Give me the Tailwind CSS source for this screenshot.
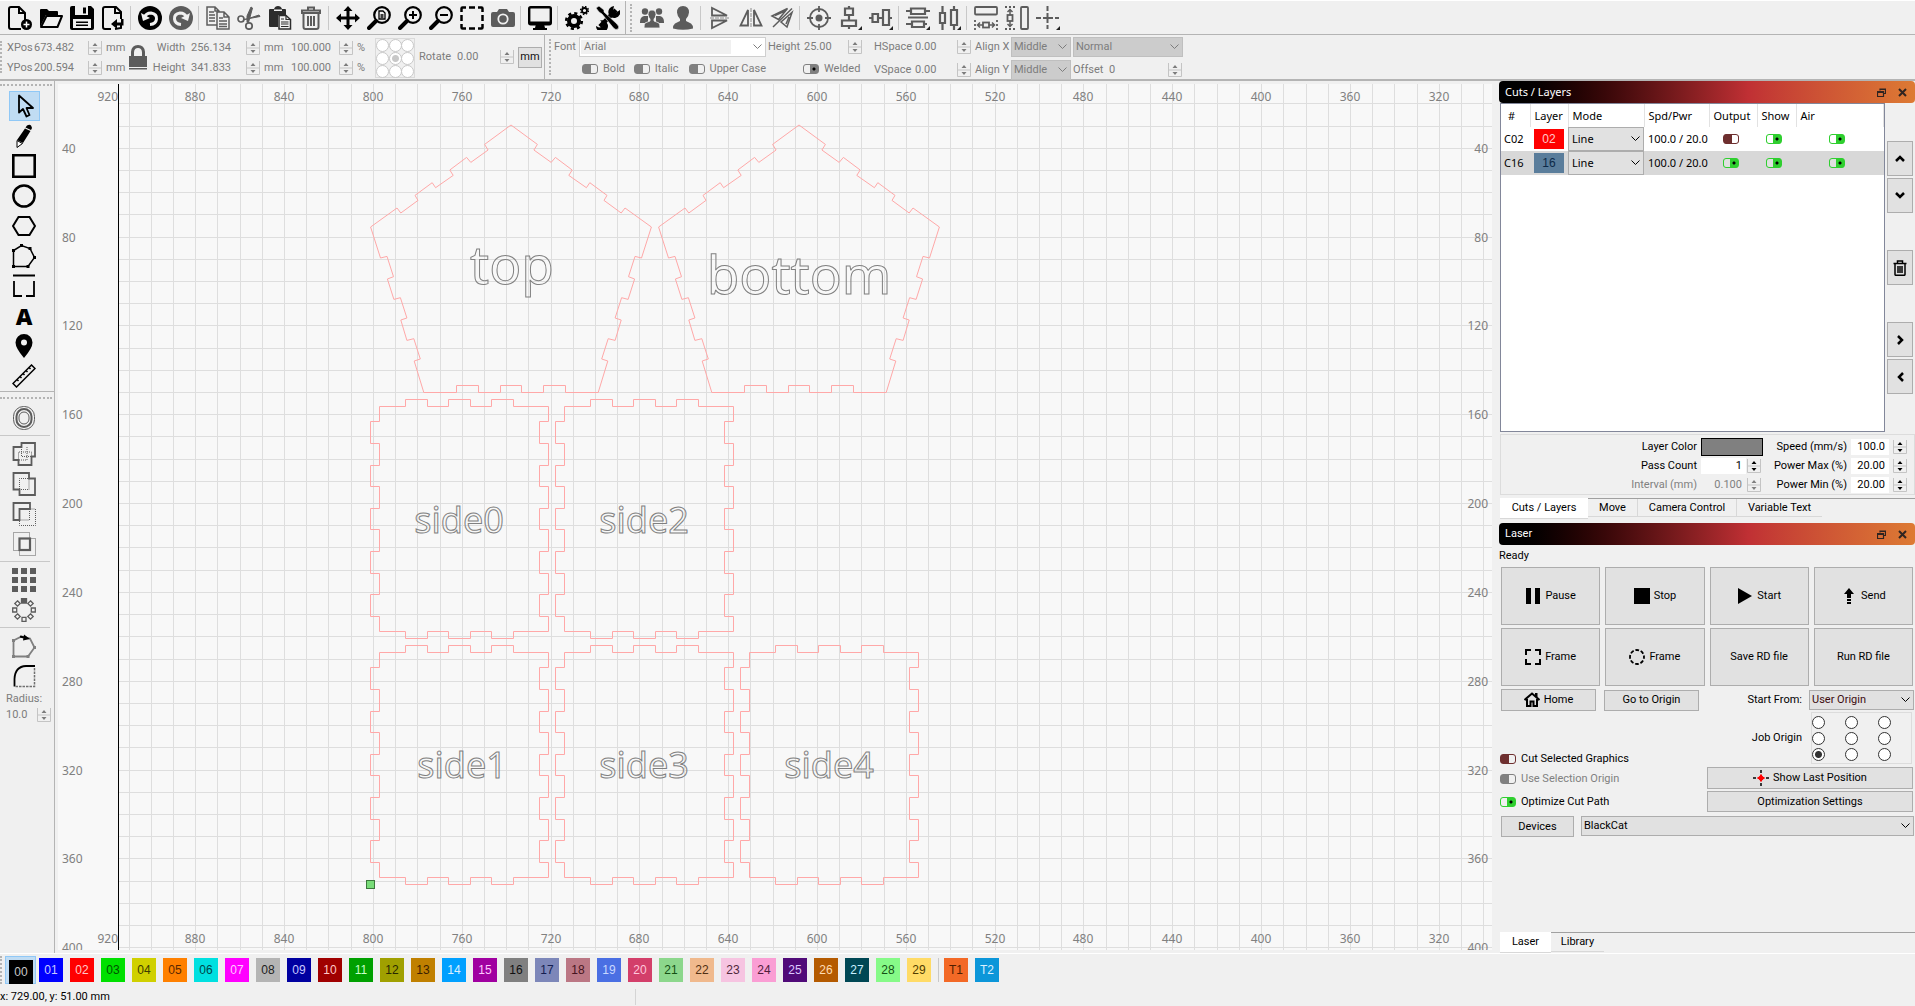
<!DOCTYPE html>
<html lang="en">
<head>
  <meta charset="UTF-8">
  <meta name="viewport" content="width=device-width, initial-scale=1.0">
  <script src="https://cdn.jsdelivr.net/npm/@tailwindcss/browser@4"></script>
  <title>Laser Layout</title>
</head>
<body class="h-screen flex flex-col overflow-hidden bg-[#f0f0f0] font-[Roboto,sans-serif] text-[11px] leading-4 text-black whitespace-nowrap">

  <!-- shared symbols -->
  <svg class="hidden">
    <symbol id="spin" viewBox="0 0 14 14">
      <path d="M.5 0V13.5H13.5V0M.5 7H13.5" fill="none" stroke="#c4c4c4"/>
      <path d="M4.500 5L7 2L9.500 5ZM4.500 9L7 12L9.500 9Z" fill="currentColor"/>
    </symbol>
    <symbol id="restore" viewBox="0 0 9 9">
      <path d="M3 2.500V1H8.500V5.500H6.500M.5 3.500H6.500V8.500H.5ZM.5 4.500H6.500M3 1.500H8.500" fill="none" stroke="#302420" stroke-width="1.200"/>
    </symbol>
    <symbol id="close" viewBox="0 0 9 9">
      <path d="M1 1L8 8M8 1L1 8" stroke="#302420" stroke-width="2"/>
    </symbol>
    <symbol id="chev" viewBox="0 0 9 6">
      <path d="M.5 .5L4.500 4.500L8.500 .5" fill="none" stroke="currentColor"/>
    </symbol>
    <symbol id="side-panel" viewBox="0 0 180 241" overflow="visible">
      <path d="M9 7H35V0H57V7H78V0H100V7H121V0H143V7H178V22H169V44H178V66H169V87H178V109H169V130H178V152H169V174H178V195H169V217H178V232H143V239H121V232H100V239H78V232H57V239H35V232H9V217H0V195H9V174H0V152H9V130H0V109H9V87H0V66H9V44H0V22H9Z"/>
    </symbol>
  </svg>

  <!-- main toolbar -->
  <header class="flex h-[35px] shrink-0 items-center border-t border-b border-t-white border-b-[#b4b4b4] pt-px pl-1">
    <button aria-label="New" class="w-[31px] pl-1"><svg class="size-6" viewBox="0 0 24 24" fill="none" stroke="#000" stroke-width="2"><path d="M13 23H3Q1 23 1 21V3Q1 1 3 1H11L17 7V14M11 1V7H17"/><circle cx="18.500" cy="18.500" r="5.500" fill="#000" stroke="none"/><path d="M18.500 15.500V21.500M15.500 18.500H21.500" stroke="#fff" stroke-width="1.500"/></svg></button>
    <button aria-label="Open" class="w-[31px] pl-1"><svg class="size-6" viewBox="0 0 24 24"><path d="M1 21V4Q1 3 2 3H8L10 5H18Q19 5 19 6V9H7Z" fill="#000"/><path d="M7.500 10H23L18.500 21H2Z" fill="#f0f0f0" stroke="#000" stroke-width="2" stroke-linejoin="round"/></svg></button>
    <button aria-label="Save" class="w-[31px] pl-1"><svg class="size-6" viewBox="0 0 24 24"><path d="M0 2Q0 0 2 0H21L24 3V22Q24 24 22 24H2Q0 24 0 22Z"/><path d="M5 0H18V9H5ZM3 13H21V22H3Z" fill="#f0f0f0"/><path d="M13 1.500H16V7.500H13ZM6 15.500H18V17H6ZM6 18.500H18V20H6Z"/></svg></button>
    <button aria-label="Import" class="w-[31px] pl-1"><svg class="size-6" viewBox="0 0 24 24" fill="none" stroke="#000" stroke-width="2"><path d="M10 23H4Q2 23 2 21V3Q2 1 4 1H15L20 6V13M20 17V22L14 23M14 1V7H20"/><path d="M10 18L16 13V16.500H20V13H22.500V19.500H16V23Z" fill="#000" stroke="none"/></svg></button>
    <span class="mx-[2px] h-6 w-[2px] border-l border-[#c8c8c8]"></span>
    <button aria-label="Undo" class="w-[31px] pl-1"><svg class="size-6" viewBox="0 0 24 24"><circle cx="12" cy="12" r="12"/><path d="M6 12Q8 7 13 7Q19 8 18.500 13Q18 18 12 18.500" fill="none" stroke="#f0f0f0" stroke-width="3"/><path d="M3 7L5 15L12 12Z" fill="#f0f0f0"/></svg></button>
    <button aria-label="Redo" class="w-[31px] pl-1"><svg class="size-6" viewBox="0 0 24 24"><circle cx="12" cy="12" r="12" fill="#5c5c5c"/><path d="M18 12Q16 7 11 7Q5 8 5.500 13Q6 18 12 18.500" fill="none" stroke="#f0f0f0" stroke-width="3"/><path d="M21 7L19 15L12 12Z" fill="#f0f0f0"/></svg></button>
    <span class="mx-[2px] h-6 w-[2px] border-l border-[#c8c8c8]"></span>
    <button aria-label="Copy" class="w-[31px] pl-1"><svg class="size-6" viewBox="0 0 24 24" fill="#f0f0f0" stroke="#5c5c5c" stroke-width="1.500"><path d="M1 1H9L13 5V19H1ZM9 1V5H13M3 6H8M3 9H9M3 12H9M3 15H9"/><path d="M11 6H18L23 11V23H11ZM18 6V11H23M13 12H17M13 15H21M13 18H21M13 20.500H21"/></svg></button>
    <button aria-label="Cut" class="w-[31px] pl-1"><svg class="size-6" viewBox="0 0 24 24" fill="none" stroke="#5c5c5c" stroke-width="1.700"><circle cx="4" cy="13" r="3"/><circle cx="12" cy="20" r="3.200"/><path d="M7 13.500L23 10.500L22 9L10 13Z" fill="#5c5c5c" stroke-width="1"/><path d="M11.500 16.500L15.500 2L14 1L10 10V16Z" fill="#5c5c5c" stroke-width="1"/></svg></button>
    <button aria-label="Paste" class="w-[31px] pl-1"><svg class="size-6" viewBox="0 0 24 24"><path d="M1 4Q1 3 2 3H6Q7 0 10 0Q13 0 14 3H17Q18 3 18 4V9H10V21H2Q1 21 1 20Z" fill="#2c2c2c"/><path d="M6 3.500H14V5H6Z" fill="#f0f0f0"/><path d="M11 9.500H18L22.500 13.500V23H11Z" fill="#f0f0f0" stroke="#2c2c2c" stroke-width="1.500"/><path d="M18 9.500V13.500H22M13 13H16M13 16H20.500M13 18H20.500M13 20.500H20.500" stroke="#2c2c2c" stroke-width="1.200" fill="none"/></svg></button>
    <button aria-label="Delete" class="w-[31px] pl-1"><svg class="size-6" viewBox="0 0 24 24" fill="none" stroke="#5c5c5c" stroke-width="2"><path d="M3 7H21V4.500H3ZM9 4V1.500H15V4M4.500 7V21Q4.500 23 6.500 23H17.500Q19.500 23 19.500 21V7M9 10V20M12 10V20M15 10V20"/></svg></button>
    <span class="mx-[2px] h-6 w-[2px] border-l border-[#c8c8c8]"></span>
    <button aria-label="Pan" class="w-[31px] pl-1"><svg class="size-6" viewBox="0 0 24 24"><path d="M12 0L16.500 5H13.500V10.500H19V7.500L24 12L19 16.500V13.500H13.500V19H16.500L12 24L7.500 19H10.500V13.500H5V16.500L0 12L5 7.500V10.500H10.500V5H7.500Z"/></svg></button>
    <button aria-label="Zoom to page" class="w-[31px] pl-1"><svg class="size-6" viewBox="0 0 24 24" fill="none" stroke="#000"><circle cx="15" cy="9" r="7.800" stroke-width="2.200"/><path d="M9 15L2 22" stroke-width="4" stroke-linecap="round"/><path d="M12 5H16L18 7V13H12ZM13.500 9H16.500M13.500 11H16.500" stroke-width="1.300"/></svg></button>
    <button aria-label="Zoom in" class="w-[31px] pl-1"><svg class="size-6" viewBox="0 0 24 24" fill="none" stroke="#000"><circle cx="15" cy="9" r="7.800" stroke-width="2.200"/><path d="M9 15L2 22" stroke-width="4" stroke-linecap="round"/><path d="M11 9H19M15 5V13" stroke-width="2"/></svg></button>
    <button aria-label="Zoom out" class="w-[31px] pl-1"><svg class="size-6" viewBox="0 0 24 24" fill="none" stroke="#000"><circle cx="15" cy="9" r="7.800" stroke-width="2.200"/><path d="M9 15L2 22" stroke-width="4" stroke-linecap="round"/><path d="M11 9H19" stroke-width="2"/></svg></button>
    <button aria-label="Frame selection" class="w-[31px] pl-1"><svg class="size-6" viewBox="0 0 24 24" fill="none" stroke="#000" stroke-width="2.500"><path d="M1.500 6V2.500Q1.500 1.500 2.500 1.500H6M9 1.500H15M18 1.500H21.500Q22.500 1.500 22.500 2.500V6M22.500 9V15M22.500 18V21.500Q22.500 22.500 21.500 22.500H18M15 22.500H9M6 22.500H2.500Q1.500 22.500 1.500 21.500V18M1.500 15V9"/></svg></button>
    <button aria-label="Camera" class="w-[31px] pl-1"><svg class="size-6" viewBox="0 0 24 24"><path d="M0 8Q0 6 2 6H6L8 3H16L18 6H22Q24 6 24 8V19Q24 21 22 21H2Q0 21 0 19Z" fill="#5c5c5c"/><circle cx="12" cy="13" r="4.700" fill="none" stroke="#f0f0f0" stroke-width="1.800"/></svg></button>
    <span class="mx-[2px] h-6 w-[2px] border-l border-[#c8c8c8]"></span>
    <button aria-label="Preview" class="w-[31px] pl-1"><svg class="size-6" viewBox="0 0 24 24"><rect x="1.200" y="1.200" width="21.600" height="17" rx="1.500" fill="none" stroke="#000" stroke-width="2.400"/><path d="M8 18H16L17 22H19V24H5V22H7ZM1 15.500H23V18H1Z"/></svg></button>
    <span class="mx-[2px] h-6 w-[2px] border-l border-[#c8c8c8]"></span>
    <button aria-label="Settings" class="w-[31px] pl-1"><svg class="size-6" viewBox="0 0 24 24" fill="none" stroke="#000"><circle cx="9" cy="15" r="5" stroke-width="4"/><circle cx="9" cy="15" r="7.800" stroke-width="2.600" stroke-dasharray="3.100 3.026"/><circle cx="19.500" cy="4.500" r="2.500" stroke-width="1.800"/><circle cx="19.500" cy="4.500" r="3.900" stroke-width="1.500" stroke-dasharray="1.500 1.563"/></svg></button>
    <button aria-label="Device settings" class="w-[31px] pl-1"><svg class="size-6" viewBox="0 0 24 24"><path d="M20 4L4 20.500" stroke="#000" stroke-width="4.500"/><path d="M24 4A6 6 0 1 1 18 0L17 5L19.500 7ZM0 20A6 6 0 1 0 4 14.500L8 18L6 21L3 21.500Z"/><path d="M0 2L3 0L8 4V6L21 18Q24 21 22 23Q20 24.500 17.500 22L6 8L3 6Z" stroke="#f0f0f0" stroke-width=".6"/></svg></button>
    <span class="ml-[2px] h-[34px] border-l border-[#b4b4b4]"></span>
    <span class="mx-[4px] h-7 w-0 border-l-2 border-dotted border-[#b4b4b4]"></span>
    <button aria-label="Group" class="w-[31px] pl-1"><svg class="size-6" viewBox="0 0 24 24" fill="#5c5c5c"><circle cx="5" cy="5.500" r="3.200"/><circle cx="19" cy="5.500" r="3.200"/><path d="M0 16Q0 11 4 10H8V17H0ZM24 16Q24 11 20 10H16V17H24Z"/><path d="M12 4Q16 4 16 8.500Q15.500 12 14 13V15L19 17Q20 18 20 22H4Q4 18 5 17L10 15V13Q8.500 12 8 8.500Q8 4 12 4Z" stroke="#f0f0f0" stroke-width=".8"/></svg></button>
    <button aria-label="Ungroup" class="w-[31px] pl-1"><svg class="size-6" viewBox="0 0 24 24" fill="#5c5c5c"><path d="M12 0Q18 0 18 6.500Q17.500 11 15 13V15L20 17.500Q22 19 22 22.500Q12 25 2 22.500Q2 19 4 17.500L9 15V13Q6.500 11 6 6.500Q6 0 12 0Z"/></svg></button>
    <span class="mx-[2px] h-6 w-[2px] border-l border-[#c8c8c8]"></span>
    <button aria-label="Flip vertical" class="w-[31px] pl-1"><svg class="size-6" viewBox="0 0 24 24" fill="none" stroke="#5c5c5c" stroke-width="1.800"><path d="M4 2V9.500H19ZM4 22V14.500H19Z"/><path d="M2 12H22" stroke="#8c8c8c" stroke-width="1" stroke-dasharray="4 1"/></svg></button>
    <button aria-label="Flip horizontal" class="w-[31px] pl-1"><svg class="size-6" viewBox="0 0 24 24" fill="none" stroke="#5c5c5c" stroke-width="1.800"><path d="M1.500 19.500H9V4ZM22.500 19.500H15V4Z"/><path d="M12 2V22" stroke="#8c8c8c" stroke-width="1" stroke-dasharray="4 1"/></svg></button>
    <button aria-label="Mirror" class="w-[31px] pl-1"><svg class="size-6" viewBox="0 0 24 24" fill="none" stroke="#5c5c5c" stroke-width="1.500"><path d="M2 10L17.500 2.500L8.500 13.500ZM5 9.500L15 5M22 6.500L17 21L11 16ZM19 11L16 18M3 21L22 2.500"/></svg></button>
    <span class="mx-[2px] h-6 w-[2px] border-l border-[#c8c8c8]"></span>
    <button aria-label="Center" class="w-[31px] pl-1"><svg class="size-6" viewBox="0 0 24 24" fill="none" stroke="#5c5c5c" stroke-width="1.800"><circle cx="12" cy="12" r="9"/><path d="M12 0V6M12 18V24M0 12H6M18 12H24"/><circle cx="12" cy="12" r="3.500" fill="#5c5c5c" stroke="none"/></svg></button>
    <button aria-label="Align vertical center" class="w-[31px] pl-1"><svg class="size-6" viewBox="0 0 24 24" fill="none" stroke="#5c5c5c" stroke-width="2.200"><path d="M7 2.500H15V9H7ZM4 14.500H18V20H4ZM11 0V2M11 9V14M11 20V23"/><path d="M24 20V24H20Z" fill="#222" stroke="none"/></svg></button>
    <button aria-label="Align horizontal center" class="w-[31px] pl-1"><svg class="size-6" viewBox="0 0 24 24" fill="none" stroke="#5c5c5c" stroke-width="2.200"><path d="M3.500 8H9V16H3.500ZM14 4H20V19H14ZM0 12H3M9 12H14M20 12H23"/><path d="M24 20V24H20Z" fill="#222" stroke="none"/></svg></button>
    <span class="mx-[2px] h-6 w-[2px] border-l border-[#c8c8c8]"></span>
    <button aria-label="Distribute vertical" class="w-[31px] pl-1"><svg class="size-6" viewBox="0 0 24 24" fill="none" stroke="#5c5c5c" stroke-width="2.200"><path d="M5 2.500H19V8H5ZM6 15.500H18V21H6ZM0 5H5M19 5H24M0 18H6M18 18H21M2 11.500H22" /><path d="M24 20V24H20Z" fill="#222" stroke="none"/></svg></button>
    <button aria-label="Distribute horizontal" class="w-[31px] pl-1"><svg class="size-6" viewBox="0 0 24 24" fill="none" stroke="#5c5c5c" stroke-width="2.200"><path d="M3 7H8V17H3ZM14 4H20V19H14ZM5.500 0V7M5.500 17V24M17 0V4M17 19V24"/><path d="M24 20V24H20Z" fill="#222" stroke="none"/></svg></button>
    <span class="mx-[2px] h-6 w-[2px] border-l border-[#c8c8c8]"></span>
    <button aria-label="Move horizontally together" class="w-[31px] pl-1"><svg class="size-6" viewBox="0 0 24 24" fill="none" stroke="#5c5c5c" stroke-width="1.800"><rect x="1" y="1" width="22" height="7.500" rx="1"/><path d="M1 14V24M23 14V24" stroke-dasharray="2 2"/><rect x="9" y="16.500" width="6" height="5"/><path d="M4 19H9M15 19H20M6 16.500L3.500 19L6 21.500M18 16.500L20.500 19L18 21.500" stroke-width="1.500"/></svg></button>
    <button aria-label="Move vertically together" class="w-[31px] pl-1"><svg class="size-6" viewBox="0 0 24 24" fill="none" stroke="#5c5c5c" stroke-width="1.800"><rect x="16" y="1" width="7" height="22" rx="1"/><path d="M0 1H10M0 23H10" stroke-dasharray="2 2"/><rect x="2.500" y="9" width="5" height="6"/><path d="M5 4V9M5 15V20M2.500 6L5 3.500L7.500 6M2.500 18L5 20.500L7.500 18" stroke-width="1.500"/></svg></button>
    <button aria-label="Origin cross" class="w-[31px] pl-1"><svg class="size-6" viewBox="0 0 24 24" fill="none" stroke="#5c5c5c" stroke-width="2"><path d="M0 12H5M7 12H17M19 12H23M11.500 0V5M11.500 7V17M11.500 19V23"/><path d="M24 20V24H20Z" fill="#222" stroke="none"/></svg></button>
  </header>

  <!-- numeric and text properties -->
  <section class="flex h-[46px] shrink-0 border-b-2 border-[#b4b4b4] text-[#7c7c7c]">
    <span class="mt-[6px] h-8 w-[7px] border-l-2 border-dotted border-[#b4b4b4]"></span>
    <div class="mt-[3px] grid w-[121px] grid-cols-[27px_54px_18px_1fr] grid-rows-[20px_20px] items-center">
      <label for="xpos">XPos</label><input id="xpos" value="673.482" class="w-full"><svg class="size-[14px]"><use href="#spin"/></svg><span>mm</span>
      <label for="ypos">YPos</label><input id="ypos" value="200.594" class="w-full"><svg class="size-[14px]"><use href="#spin"/></svg><span>mm</span>
    </div>
    <button aria-label="Lock aspect ratio" class="w-5"><svg class="h-[25px] w-5" viewBox="0 0 20 25"><path d="M4.500 12V7Q5 1.500 10 1.500Q15 1.500 15.500 7V12" fill="none" stroke="#5c5c5c" stroke-width="3"/><path d="M1 11H19V22H1ZM1 23H19V24.500H1Z" fill="#5c5c5c"/></svg></button>
    <div class="mt-[3px] grid w-[224px] grid-cols-[37px_6px_55px_18px_27px_48px_18px_1fr] grid-rows-[20px_20px] items-center">
      <label for="width" class="text-right">Width</label><span></span><input id="width" value="256.134" class="w-full"><svg class="size-[14px]"><use href="#spin"/></svg><span>mm</span><input aria-label="Width percent" value="100.000" class="w-full"><svg class="size-[14px]"><use href="#spin"/></svg><span>%</span>
      <label for="height" class="text-right">Height</label><span></span><input id="height" value="341.833" class="w-full"><svg class="size-[14px]"><use href="#spin"/></svg><span>mm</span><input aria-label="Height percent" value="100.000" class="w-full"><svg class="size-[14px]"><use href="#spin"/></svg><span>%</span>
    </div>
    <fieldset class="mt-[3px] ml-[3px] grid h-10 w-10 grid-cols-3 place-items-center border border-[#dadada]">
      <input type="radio" name="anchor" aria-label="Top left" class="size-[13px] appearance-none rounded-full border border-[#c8c8c8] bg-white">
      <input type="radio" name="anchor" aria-label="Top" class="size-[13px] appearance-none rounded-full border border-[#c8c8c8] bg-white">
      <input type="radio" name="anchor" aria-label="Top right" class="size-[13px] appearance-none rounded-full border border-[#c8c8c8] bg-white">
      <input type="radio" name="anchor" aria-label="Left" class="size-[13px] appearance-none rounded-full border border-[#c8c8c8] bg-white">
      <input type="radio" name="anchor" aria-label="Middle" checked class="size-[13px] appearance-none rounded-full border border-[#c8c8c8] bg-[radial-gradient(circle,#c8c8c8_3px,#fff_4px)]">
      <input type="radio" name="anchor" aria-label="Right" class="size-[13px] appearance-none rounded-full border border-[#c8c8c8] bg-white">
      <input type="radio" name="anchor" aria-label="Bottom left" class="size-[13px] appearance-none rounded-full border border-[#c8c8c8] bg-white">
      <input type="radio" name="anchor" aria-label="Bottom" class="size-[13px] appearance-none rounded-full border border-[#c8c8c8] bg-white">
      <input type="radio" name="anchor" aria-label="Bottom right" class="size-[13px] appearance-none rounded-full border border-[#c8c8c8] bg-white">
    </fieldset>
    <div class="flex items-center pl-1">
      <label for="rotate" class="w-[38px]">Rotate</label>
      <input id="rotate" value="0.00" class="w-[43px]">
      <svg class="mr-1 size-[14px]"><use href="#spin"/></svg>
      <button class="h-[21px] w-6 border border-[#adadad] bg-[#e1e1e1] text-[#101010]">mm</button>
    </div>
    <span class="ml-[2px] w-[5px] border-l border-[#b4b4b4]"></span>
    <span class="mt-[4px] mr-[2px] h-9 w-[3px] border-l-2 border-dotted border-[#b4b4b4]"></span>

    <div class="flex w-[212px] flex-col gap-[2px] pt-[2px]">
      <div class="flex items-center">
        <label for="font" class="w-[25px]">Font</label>
        <div class="grid flex-1 items-center">
          <select id="font" class="col-start-1 row-start-1 h-5 appearance-none border border-[#cfcfcf] bg-[linear-gradient(#f0f0f0,#f0f0f0)] bg-[length:150px_14px] bg-[position:1px_2px] bg-no-repeat bg-white pl-1"><option>Arial</option></select>
          <svg class="col-start-1 row-start-1 mr-1 h-[6px] w-[9px] justify-self-end"><use href="#chev"/></svg>
        </div>
      </div>
      <div class="flex h-[22px] items-center pl-7">
        <label class="flex w-[54px] items-center gap-[5px]"><input type="checkbox" class="h-[10px] w-4 appearance-none rounded-[3px] border border-[#808080] bg-[linear-gradient(to_right,#808080_55%,transparent_55%)]">Bold</label>
        <label class="flex w-[57px] items-center gap-[5px]"><input type="checkbox" class="h-[10px] w-4 appearance-none rounded-[3px] border border-[#808080] bg-[linear-gradient(to_right,#808080_55%,transparent_55%)]">Italic</label>
        <label class="flex items-center gap-[5px]"><input type="checkbox" class="h-[10px] w-4 appearance-none rounded-[3px] border border-[#808080] bg-[linear-gradient(to_right,#808080_55%,transparent_55%)]">Upper Case</label>
      </div>
    </div>
    <div class="flex w-[104px] flex-col gap-[2px] pt-[2px] pl-[2px]">
      <div class="flex h-5 items-center">
        <label for="theight" class="w-9">Height</label><input id="theight" value="25.00" class="w-11"><svg class="size-[14px]"><use href="#spin"/></svg>
      </div>
      <label class="flex h-[22px] items-center gap-[5px] pl-[35px]"><input type="checkbox" checked class="h-[10px] w-4 appearance-none rounded-[3px] border border-[#808080] bg-[radial-gradient(circle_at_10px_4px,#000_1px,transparent_2px),linear-gradient(to_right,transparent_45%,#808080_45%)]">Welded</label>
    </div>
    <div class="grid w-[105px] grid-cols-[41px_42px_1fr] grid-rows-[20px_22px] items-center gap-y-[2px] pt-[2px] pl-1">
      <label for="hspace">HSpace</label><input id="hspace" value="0.00" class="w-full"><svg class="size-[14px]"><use href="#spin"/></svg>
      <label for="vspace">VSpace</label><input id="vspace" value="0.00" class="w-full"><svg class="size-[14px]"><use href="#spin"/></svg>
    </div>
    <div class="grid grid-cols-[36px_60px_112px] grid-rows-[20px_22px] items-center gap-y-[2px] pt-[2px]">
      <label for="alignx">Align X</label>
      <div class="grid items-center"><select id="alignx" disabled class="col-start-1 row-start-1 h-5 appearance-none border border-[#bfbfbf] bg-[#cccccc] pl-[2px]"><option>Middle</option></select><svg class="col-start-1 row-start-1 mr-1 h-[6px] w-[9px] justify-self-end"><use href="#chev"/></svg></div>
      <div class="ml-[2px] grid items-center"><select aria-label="Layout" disabled class="col-start-1 row-start-1 h-5 appearance-none border border-[#bfbfbf] bg-[#cccccc] pl-[2px]"><option>Normal</option></select><svg class="col-start-1 row-start-1 mr-1 h-[6px] w-[9px] justify-self-end"><use href="#chev"/></svg></div>
      <label for="aligny">Align Y</label>
      <div class="grid items-center"><select id="aligny" disabled class="col-start-1 row-start-1 h-5 appearance-none border border-[#bfbfbf] bg-[#cccccc] pl-[2px]"><option>Middle</option></select><svg class="col-start-1 row-start-1 mr-1 h-[6px] w-[9px] justify-self-end"><use href="#chev"/></svg></div>
      <div class="flex items-center pl-[2px]"><label for="offset" class="w-9">Offset</label><input id="offset" value="0" class="w-[59px]"><svg class="size-[14px]"><use href="#spin"/></svg></div>
    </div>
  </section>

  <main class="flex min-h-0 flex-1">
    <!-- drawing tools -->
    <nav class="flex w-[55px] shrink-0 flex-col border-r border-[#b4b4b4]">
      <span class="mt-[3px] mb-[5px] w-[52px] border-t-2 border-dotted border-[#b4b4b4]"></span>
      <button aria-label="Select" class="ml-[9px] grid h-[30px] w-[31px] place-items-center border border-[#90c8f6] bg-[#c0dcf3]"><svg class="size-6" viewBox="0 0 24 24"><path d="M6 1.500V18.500L10 15L13.500 22.500L16.500 21L13.500 14H20Z" fill="#c0dcf3" stroke="#000" stroke-width="1.800" stroke-linejoin="round"/></svg></button>
      <button aria-label="Draw lines" class="ml-[9px] grid h-[30px] w-[30px] place-items-center"><svg class="size-6" viewBox="0 0 24 24"><path d="M15 1.500Q19 -1 20 4L19 6L13.500 3.500ZM13 4.500L18.500 7L11 19L5 16Z"/><path d="M5 16.500L10.500 19.500L5 23.500Z" fill="#fff" stroke="#000"/></svg></button>
      <button aria-label="Rectangle" class="ml-[9px] grid h-[30px] w-[30px] place-items-center"><svg class="size-6" viewBox="0 0 24 24" fill="none" stroke="#000" stroke-width="2.600"><path d="M1.300 1.300H22.700V22.700H1.300Z"/></svg></button>
      <button aria-label="Ellipse" class="ml-[9px] grid h-[30px] w-[30px] place-items-center"><svg class="size-6" viewBox="0 0 24 24" fill="none" stroke="#000" stroke-width="2.500"><circle cx="12" cy="12" r="10.600"/></svg></button>
      <button aria-label="Polygon" class="ml-[9px] grid h-[30px] w-[30px] place-items-center"><svg class="size-6" viewBox="0 0 24 24" fill="none" stroke="#000" stroke-width="2"><path d="M1 12L6.500 3H17.500L23 12L17.500 21H6.500Z"/></svg></button>
      <button aria-label="Edit nodes" class="ml-[9px] grid h-[30px] w-[30px] place-items-center"><svg class="size-6" viewBox="0 0 24 24"><path d="M1.500 22.500V6.500L9.500 1.500L18 4.500L22.500 13.500L16 22.500Z" fill="none" stroke="#000" stroke-width="1.500"/><path d="M0 21H3V24H0ZM0 5H3V8H0ZM8 0H11V3H8ZM16.500 3H19.500V6H16.500ZM21 12H24V15H21ZM14.500 21H17.500V24H14.500Z"/></svg></button>
      <button aria-label="Trim" class="ml-[9px] grid h-[30px] w-[30px] place-items-center"><svg class="size-6" viewBox="0 0 24 24" fill="none" stroke="#000" stroke-width="1.800"><path d="M1 1.500H23M2 7V22H10M14 22H22V7"/></svg></button>
      <button aria-label="Text" class="ml-[9px] grid h-[30px] w-[30px] place-items-center font-['Open_Sans',sans-serif] text-[23px] leading-none font-extrabold">A</button>
      <button aria-label="Position marker" class="ml-[9px] grid h-[30px] w-[30px] place-items-center"><svg class="size-6" viewBox="0 0 24 24"><path fill-rule="evenodd" d="M12 24Q3.500 14 3.500 8.500A8.500 8.500 0 0 1 20.500 8.500Q20.500 14 12 24ZM12 5.500A3 3 0 1 0 12 11.500A3 3 0 1 0 12 5.500Z"/></svg></button>
      <button aria-label="Measure" class="ml-[9px] grid h-[30px] w-[30px] place-items-center"><svg class="size-6" viewBox="0 0 24 24" fill="none" stroke="#000" stroke-width="1.500"><path d="M1 19.500L19.500 1L23 4.500L4.500 23ZM5 15.500L6.500 17M8 12.500L9.500 14M11 9.500L12.500 11M14 6.500L15.500 8M17 3.500L18.500 5"/></svg></button>
      <span class="border-t border-[#b4b4b4]"></span>
      <span class="mt-[5px] mb-1 w-[52px] border-t-2 border-dotted border-[#b4b4b4]"></span>
      <button aria-label="Offset shapes" class="ml-[9px] grid h-[30px] w-[30px] place-items-center"><svg class="size-6" viewBox="0 0 24 24" fill="none" stroke="#5c5c5c"><rect x="1.500" y=".5" width="21" height="23" rx="10"/><rect x="4.500" y="3" width="15" height="18" rx="7.500" stroke-width="2"/><rect x="7" y="6" width="10" height="12" rx="5"/></svg></button>
      <span class="my-[2px] h-[2px] w-[50px] border-t border-[#c8c8c8]"></span>
      <button aria-label="Weld" class="ml-[9px] grid h-[30px] w-[30px] place-items-center"><svg class="size-6" viewBox="0 0 24 24" fill="none" stroke="#5c5c5c" stroke-width="1.800"><path d="M9.500 1H23V14.500H19.500V23H6.500V18H1.500V5H9.500Z"/><path d="M9.500 5V14.500H19.500M15 5V18H6.500V10H19.500V14" stroke-width="1" stroke-dasharray="1 1"/></svg></button>
      <button aria-label="Boolean union" class="ml-[9px] grid h-[30px] w-[30px] place-items-center"><svg class="size-6" viewBox="0 0 24 24" fill="none" stroke="#5c5c5c" stroke-width="1.800"><path d="M1.500 1H17V6.500H23V23H7.500V17.500H1.500Z"/><path d="M7.500 17V6.500H17V17.500H7.500" stroke-width="1" stroke-dasharray="1 1"/></svg></button>
      <button aria-label="Boolean subtract" class="ml-[9px] grid h-[30px] w-[30px] place-items-center"><svg class="size-6" viewBox="0 0 24 24" fill="none" stroke="#5c5c5c" stroke-width="1.800"><path d="M1.500 1H18V7H7.500V18H1.500Z"/><path d="M17.500 7H23.500V23.500H7.500V18H17.500V7" stroke-width="1" stroke-dasharray="1 1"/></svg></button>
      <button aria-label="Boolean intersection" class="ml-[9px] grid h-[30px] w-[30px] place-items-center"><svg class="size-6" viewBox="0 0 24 24" fill="none" stroke="#5c5c5c"><path d="M1.500 .5H17.500V6.500H23.500V23.500H7.500V18.500H1.500Z" stroke-dasharray="1 1"/><rect x="7.500" y="6.500" width="10.500" height="11.500" stroke-width="2.200"/></svg></button>
      <span class="my-[2px] h-[2px] w-[50px] border-t border-[#c8c8c8]"></span>
      <button aria-label="Grid array" class="ml-[9px] grid h-[30px] w-[30px] place-items-center"><svg class="size-6" viewBox="0 0 24 24" fill="#5c5c5c"><path d="M0 0H6V6H0ZM9 0H15V6H9ZM18 0H24V6H18ZM0 9H6V15H0ZM9 9H15V15H9ZM18 9H24V15H18ZM0 18H6V24H0ZM9 18H15V24H9ZM18 18H24V24H18Z"/></svg></button>
      <button aria-label="Circular array" class="ml-[9px] grid h-[30px] w-[30px] place-items-center"><svg class="size-6" viewBox="0 0 24 24" fill="none" stroke="#5c5c5c" stroke-width="1.300"><path d="M9.500 .7H14.500V5H9.500Z" fill="#5c5c5c"/><path d="M.7 10H4.700V14H.7ZM19.300 10H23.300V14H19.300ZM10 19.300H14V23.300H10ZM5.500 2.800L8.200 5.500L5.500 8.200L2.800 5.500ZM18.500 2.800L21.200 5.500L18.500 8.200L15.800 5.500ZM5.500 15.800L8.200 18.500L5.500 21.200L2.800 18.500ZM18.500 15.800L21.200 18.500L18.500 21.200L15.800 18.500Z"/></svg></button>
      <span class="my-[2px] h-[2px] w-[50px] border-t border-[#c8c8c8]"></span>
      <button aria-label="Start point" class="ml-[9px] grid h-[30px] w-[30px] place-items-center"><svg class="size-6" viewBox="0 0 24 24"><path d="M1.500 22.500V6.500L9.500 2.500L18 4.500L22.500 13.500L16 22.500Z" fill="none" stroke="#808080" stroke-width="1.800"/><path d="M0 21H3V24H0ZM0 5H3V8H0ZM21 12H24V15H21ZM14.500 21H17.500V24H14.500Z" fill="#808080"/><path d="M8 2.500L14 4" stroke="#000" stroke-width="2"/><path d="M12 .5L18 5L11 6.500Z"/></svg></button>
      <button aria-label="Radius tool" class="ml-[9px] grid h-[30px] w-[30px] place-items-center"><svg class="size-6" viewBox="0 0 24 24" fill="none"><path d="M2.500 22.500V15Q3 2.500 14 2H23" stroke="#000" stroke-width="1.800"/><path d="M22.500 4V22.500H3" stroke="#707070" stroke-width="1.500" stroke-dasharray="2.500 1"/></svg></button>
      <label for="radius" class="pl-[6px] text-[#7c7c7c]">Radius:</label>
      <div class="flex items-center pl-[6px] text-[#7c7c7c]"><input id="radius" value="10.0" class="w-[31px]"><svg class="size-[14px]"><use href="#spin"/></svg></div>
    </nav>

    <!-- workspace -->
    <div class="mt-[3px] mb-[3px] ml-[3px] min-w-0 flex-1 bg-[#f8f8f8]">
      <svg id="canvas" class="size-full overflow-hidden">
        <path id="grid" fill="none" stroke="#dedede" shape-rendering="crispEdges"/>
        <g fill="none" stroke="#ffa8a8">
          <g id="cap">
            <g transform="translate(453 41)">
              <g id="half"><polyline points="0,0 26.400,19.400 22.900,25 40.200,37.400 44.400,32.400 61.200,45 57.800,50.400 75.400,62.700 78.800,57.700 96,70.400 93,75.400 110.200,88 114,83 140.400,102 130.500,133 124,131.400 117.500,151.700 123.600,154 117.100,174.400 110.600,172.700 104.100,193 110.200,195 104.100,215.400 97.200,213.700 90.700,234 96.800,236 87.200,267.500 54.500,267.500 54.500,260.500 32.500,260.500 32.500,267.500 10.500,267.500 10.500,260.500 0,260.500"/></g>
              <use href="#half" transform="scale(-1 1)"/>
            </g>
          </g>
          <use href="#cap" x="288"/>
          <use href="#side-panel" x="312.500" y="315.500" width="180" height="241"/>
          <use href="#side-panel" x="497.500" y="315.500" width="180" height="241"/>
          <use href="#side-panel" x="312.500" y="561.500" width="180" height="241"/>
          <use href="#side-panel" x="497.500" y="561.500" width="180" height="241"/>
          <use href="#side-panel" x="682.500" y="561.500" width="180" height="241"/>
        </g>
        <g fill="none" stroke="#808080" text-anchor="middle" font-family="Noto Sans">
          <text x="454" y="200" font-size="53">top</text>
          <text x="741" y="210" font-size="53">bottom</text>
          <g font-size="36">
            <text x="401" y="449">side0</text>
            <text x="586" y="449">side2</text>
            <text x="404" y="694">side1</text>
            <text x="586" y="694">side3</text>
            <text x="771" y="694">side4</text>
          </g>
        </g>
        <rect x="308.500" y="796.500" width="8" height="8" fill="#78dc78" stroke="#3c783c"/>
        <g id="labels" fill="#808080" font-size="12" font-family="Noto Sans"></g>
      </svg>
    </div>

    <!-- docked panels -->
    <aside class="ml-[7px] flex w-[416px] shrink-0 flex-col">
      <h2 class="flex h-[22px] items-center rounded bg-linear-to-r from-black via-[#c03034] via-60% to-[#dd7a33] pr-2 pl-[6px] font-['Noto_Sans',sans-serif] text-white">Cuts / Layers
        <button aria-label="Float panel" class="ml-auto"><svg class="size-[9px]"><use href="#restore"/></svg></button>
        <button aria-label="Close panel" class="ml-3"><svg class="size-[9px]"><use href="#close"/></svg></button>
      </h2>
      <div class="flex h-[329px] pl-px">
        <div class="flex-1 border border-[#82879a] bg-white">
          <table class="w-full table-fixed border-collapse text-left font-['Noto_Sans',sans-serif]">
            <colgroup><col class="w-[29px]"><col class="w-[38px]"><col class="w-[76px]"><col class="w-[65px]"><col class="w-[48px]"><col class="w-[39px]"><col></colgroup>
            <thead>
              <tr class="h-[23px] *:border-r *:border-[#e2e2e2] *:p-0 *:pl-[4px] *:font-normal">
                <th><span class="pl-[3px]">#</span></th><th>Layer</th><th>Mode</th><th>Spd/Pwr</th><th>Output</th><th>Show</th><th>Air</th>
              </tr>
            </thead>
            <tbody>
              <tr class="h-6 *:p-0">
                <td><span class="pl-[3px]">C02</span></td>
                <td><span class="ml-[4px] block h-5 w-[30px] bg-[#ff0000] text-center font-['Liberation_Sans',sans-serif] text-[12px] leading-5 text-[#ffc8c8]">02</span></td>
                <td><div class="grid items-center"><select aria-label="C02 mode" class="col-start-1 row-start-1 h-6 appearance-none border border-[#adadad] bg-[#e1e1e1] pl-[3px]"><option>Line</option></select><svg class="col-start-1 row-start-1 mr-1 h-[6px] w-[9px] justify-self-end"><use href="#chev"/></svg></div></td>
                <td><span class="pl-[4px]">100.0 / 20.0</span></td>
                <td><input type="checkbox" aria-label="C02 output" class="ml-[14px] block h-[10px] w-4 appearance-none rounded-[3px] border border-[#6e2f2f] bg-[linear-gradient(to_right,#6e2f2f_60%,#fff_60%)]"></td>
                <td><input type="checkbox" aria-label="C02 show" checked class="ml-[9px] block h-[10px] w-4 appearance-none rounded-[3px] border border-[#2fcf2f] bg-[radial-gradient(circle_at_10px_4px,#000_1px,transparent_2px),linear-gradient(to_right,#fff_45%,#2fcf2f_45%)]"></td>
                <td><input type="checkbox" aria-label="C02 air" checked class="ml-[33px] block h-[10px] w-4 appearance-none rounded-[3px] border border-[#2fcf2f] bg-[radial-gradient(circle_at_10px_4px,#000_1px,transparent_2px),linear-gradient(to_right,#fff_45%,#2fcf2f_45%)]"></td>
              </tr>
              <tr class="h-6 bg-[#d8d8d8] *:p-0">
                <td><span class="pl-[3px]">C16</span></td>
                <td><span class="ml-[4px] block h-5 w-[30px] bg-[#5a7d9b] text-center font-['Liberation_Sans',sans-serif] text-[12px] leading-5 text-[#0c2a48]">16</span></td>
                <td><div class="grid items-center"><select aria-label="C16 mode" class="col-start-1 row-start-1 h-6 appearance-none border border-[#adadad] bg-[#e1e1e1] pl-[3px]"><option>Line</option></select><svg class="col-start-1 row-start-1 mr-1 h-[6px] w-[9px] justify-self-end"><use href="#chev"/></svg></div></td>
                <td><span class="pl-[4px]">100.0 / 20.0</span></td>
                <td><input type="checkbox" aria-label="C16 output" checked class="ml-[14px] block h-[10px] w-4 appearance-none rounded-[3px] border border-[#2fcf2f] bg-[radial-gradient(circle_at_10px_4px,#000_1px,transparent_2px),linear-gradient(to_right,#e0e0e0_45%,#2fcf2f_45%)]"></td>
                <td><input type="checkbox" aria-label="C16 show" checked class="ml-[9px] block h-[10px] w-4 appearance-none rounded-[3px] border border-[#2fcf2f] bg-[radial-gradient(circle_at_10px_4px,#000_1px,transparent_2px),linear-gradient(to_right,#e0e0e0_45%,#2fcf2f_45%)]"></td>
                <td><input type="checkbox" aria-label="C16 air" checked class="ml-[33px] block h-[10px] w-4 appearance-none rounded-[3px] border border-[#2fcf2f] bg-[radial-gradient(circle_at_10px_4px,#000_1px,transparent_2px),linear-gradient(to_right,#e0e0e0_45%,#2fcf2f_45%)]"></td>
              </tr>
            </tbody>
          </table>
        </div>
        <div class="flex w-[30px] flex-col gap-[2px] px-[2px] pt-[38px]">
          <button aria-label="Move layer up" class="grid h-[35px] place-items-center border border-[#adadad] bg-[#e1e1e1]"><svg class="h-[7px] w-[10px]" viewBox="0 0 10 7"><path d="M1 6L5 2L9 6" fill="none" stroke="#000" stroke-width="2.500"/></svg></button>
          <button aria-label="Move layer down" class="mb-[35px] grid h-[35px] place-items-center border border-[#adadad] bg-[#e1e1e1]"><svg class="h-[7px] w-[10px]" viewBox="0 0 10 7"><path d="M1 1L5 5L9 1" fill="none" stroke="#000" stroke-width="2.500"/></svg></button>
          <button aria-label="Delete layer" class="mb-[35px] grid h-[35px] place-items-center border border-[#adadad] bg-[#e1e1e1]"><svg class="h-4 w-[14px]" viewBox="0 0 14 16" fill="none" stroke="#000" stroke-width="1.500"><path d="M.5 3.500H13.500M4.500 3V1H9.500V3M2 4V14.500Q2 15.300 3 15.300H11Q12 15.300 12 14.500V4M5 6V13M7 6V13M9 6V13"/></svg></button>
          <button aria-label="Next" class="grid h-[35px] place-items-center border border-[#adadad] bg-[#e1e1e1]"><svg class="h-[10px] w-[7px]" viewBox="0 0 7 10"><path d="M1 1L5 5L1 9" fill="none" stroke="#000" stroke-width="2.500"/></svg></button>
          <button aria-label="Previous" class="grid h-[35px] place-items-center border border-[#adadad] bg-[#e1e1e1]"><svg class="h-[10px] w-[7px]" viewBox="0 0 7 10"><path d="M6 1L2 5L6 9" fill="none" stroke="#000" stroke-width="2.500"/></svg></button>
        </div>
      </div>

      <div class="mt-[2px] ml-px grid h-[61px] grid-cols-[1fr_62px_80px_38px_14px] grid-rows-[19px_19px_19px] items-center gap-x-1 border border-[#dcdcdc] pt-[2px] pr-[7px] text-right">
        <span>Layer Color</span><button aria-label="Layer color" class="h-[18px] border border-black bg-[#808080]"></button>
        <label for="speed">Speed (mm/s)</label><input id="speed" value="100.0" class="h-4 w-full bg-white pr-1 text-right"><svg class="size-[14px]"><use href="#spin"/></svg>
        <label for="pass">Pass Count</label><div class="flex items-center"><input id="pass" value="1" class="mr-px h-4 w-[45px] bg-white pr-1 text-right"><svg class="size-[14px]"><use href="#spin"/></svg></div>
        <label for="pmax">Power Max (%)</label><input id="pmax" value="20.00" class="h-4 w-full bg-white pr-1 text-right"><svg class="size-[14px]"><use href="#spin"/></svg>
        <label for="interval" class="text-[#808080]">Interval (mm)</label><div class="flex items-center text-[#808080]"><input id="interval" value="0.100" disabled class="mr-px h-4 w-[45px] pr-1 text-right"><svg class="size-[14px]"><use href="#spin"/></svg></div>
        <label for="pmin">Power Min (%)</label><input id="pmin" value="20.00" class="h-4 w-full bg-white pr-1 text-right"><svg class="size-[14px]"><use href="#spin"/></svg>
      </div>

      <div class="mt-[3px] ml-px flex h-[21px] items-start">
        <button class="h-[21px] w-[88px] border-b border-[#d8d8d8] bg-white">Cuts / Layers</button>
        <div class="flex flex-1 border-t border-[#a0a0a0]">
          <button class="h-[18px] w-[50px] border-r border-b border-[#d8d8d8]">Move</button>
          <button class="h-[18px] w-[99px] border-r border-b border-[#d8d8d8]">Camera Control</button>
          <button class="h-[18px] w-[85px] border-b border-[#d8d8d8]">Variable Text</button>
        </div>
      </div>

      <h2 class="mt-1 flex h-[22px] items-center rounded bg-linear-to-r from-black via-[#c03034] via-60% to-[#dd7a33] pr-2 pl-[6px] text-white">Laser
        <button aria-label="Float panel" class="ml-auto"><svg class="size-[9px]"><use href="#restore"/></svg></button>
        <button aria-label="Close panel" class="ml-3"><svg class="size-[9px]"><use href="#close"/></svg></button>
      </h2>
      <p class="flex h-[22px] items-center">Ready</p>
      <div class="ml-[2px] mr-[2px] grid grid-cols-4 gap-x-[5px] gap-y-[3px]">
        <button class="flex h-[58px] items-center justify-center gap-1 border border-[#adadad] bg-[#e1e1e1]"><svg class="size-4" viewBox="0 0 16 16"><path d="M1 0H6V16H1ZM10 0H15V16H10Z"/></svg>Pause</button>
        <button class="flex h-[58px] items-center justify-center gap-1 border border-[#adadad] bg-[#e1e1e1]"><svg class="size-4" viewBox="0 0 16 16"><path d="M0 0H16V16H0Z"/></svg>Stop</button>
        <button class="flex h-[58px] items-center justify-center gap-1 border border-[#adadad] bg-[#e1e1e1]"><svg class="size-4" viewBox="0 0 16 16"><path d="M1 0L15 8L1 16Z"/></svg>Start</button>
        <button class="flex h-[58px] items-center justify-center gap-1 border border-[#adadad] bg-[#e1e1e1]"><svg class="size-4" viewBox="0 0 16 16"><path d="M8 0L13 6H10V10H6V6H3ZM6 11H10V13H6ZM6 14H10V16H6Z"/></svg>Send</button>
        <button class="flex h-[58px] items-center justify-center gap-1 border border-[#adadad] bg-[#e1e1e1]"><svg class="size-4" viewBox="0 0 16 16" fill="none" stroke="#000" stroke-width="2"><path d="M1 6V1H6M10 1H15V6M15 10V15H10M6 15H1V10"/></svg>Frame</button>
        <button class="flex h-[58px] items-center justify-center gap-1 border border-[#adadad] bg-[#e1e1e1]"><svg class="size-4" viewBox="0 0 16 16" fill="none" stroke="#000" stroke-width="1.800"><circle cx="8" cy="8" r="7" stroke-dasharray="3.700 1.798" stroke-dashoffset="1.850"/></svg>Frame</button>
        <button class="h-[58px] border border-[#adadad] bg-[#e1e1e1]">Save RD file</button>
        <button class="h-[58px] border border-[#adadad] bg-[#e1e1e1]">Run RD file</button>
      </div>

      <div class="mt-[3px] ml-[2px] flex items-center">
        <button class="flex h-[22px] w-[95px] items-center justify-center gap-1 border border-[#adadad] bg-[#e1e1e1]"><svg class="size-4" viewBox="0 0 16 16" fill="none" stroke="#000" stroke-width="2"><path d="M.5 8L8 1.500L15.500 8M3 7V14H6.500V9.500H9.500V14H13V7"/><path d="M11 1H13.500V5H11Z" fill="#000" stroke="none"/></svg>Home</button>
        <button class="ml-2 h-[21px] w-[95px] border border-[#adadad] bg-[#e1e1e1]">Go to Origin</button>
        <label for="startfrom" class="mr-[7px] ml-auto">Start From:</label>
        <div class="mr-px grid w-[105px] items-center"><select id="startfrom" class="col-start-1 row-start-1 h-5 appearance-none border border-[#adadad] bg-[#e1e1e1] pl-[2px] text-[#3c0c10]"><option>User Origin</option></select><svg class="col-start-1 row-start-1 mr-1 h-[6px] w-[9px] justify-self-end"><use href="#chev"/></svg></div>
      </div>

      <div class="flex justify-between pt-px">
        <div class="flex flex-col pt-[38px] pl-px">
          <label class="flex h-[18px] items-center gap-[5px]"><input type="checkbox" class="h-[10px] w-4 appearance-none rounded-[3px] border border-[#6e2f2f] bg-[linear-gradient(to_right,#6e2f2f_60%,transparent_60%)]">Cut Selected Graphics</label>
          <label class="flex h-[22px] items-center gap-[5px] text-[#808080]"><input type="checkbox" disabled class="h-[10px] w-4 appearance-none rounded-[3px] border border-[#808080] bg-[linear-gradient(to_right,#808080_55%,transparent_55%)]">Use Selection Origin</label>
          <label class="flex h-6 items-center gap-[5px]"><input type="checkbox" checked class="h-[10px] w-4 appearance-none rounded-[3px] border border-[#2fcf2f] bg-[radial-gradient(circle_at_10px_4px,#000_1px,transparent_2px),linear-gradient(to_right,transparent_45%,#2fcf2f_45%)]">Optimize Cut Path</label>
        </div>
        <div class="mr-[2px] flex w-[206px] flex-col">
          <div class="flex items-center">
            <span class="flex-1 pr-[9px] text-right">Job Origin</span>
            <fieldset class="mr-px grid h-[52px] w-[101px] grid-cols-3 place-content-center gap-y-[3px] border border-[#dcdcdc]">
              <input type="radio" name="origin" aria-label="Back left" class="size-[13px] appearance-none rounded-full border border-[#333] bg-white">
              <input type="radio" name="origin" aria-label="Back" class="size-[13px] appearance-none rounded-full border border-[#333] bg-white">
              <input type="radio" name="origin" aria-label="Back right" class="size-[13px] appearance-none rounded-full border border-[#333] bg-white">
              <input type="radio" name="origin" aria-label="Left" class="size-[13px] appearance-none rounded-full border border-[#333] bg-white">
              <input type="radio" name="origin" aria-label="Center" class="size-[13px] appearance-none rounded-full border border-[#333] bg-white">
              <input type="radio" name="origin" aria-label="Right" class="size-[13px] appearance-none rounded-full border border-[#333] bg-white">
              <input type="radio" name="origin" aria-label="Front left" checked class="size-[13px] appearance-none rounded-full border border-[#333] bg-[radial-gradient(circle,#333_3px,#fff_4px)]">
              <input type="radio" name="origin" aria-label="Front" class="size-[13px] appearance-none rounded-full border border-[#333] bg-white">
              <input type="radio" name="origin" aria-label="Front right" class="size-[13px] appearance-none rounded-full border border-[#333] bg-white">
            </fieldset>
          </div>
          <button class="mt-[3px] flex h-[22px] items-center justify-center gap-1 border border-[#adadad] bg-[#e1e1e1]"><svg class="size-4" viewBox="0 0 16 16"><path d="M0 8H3M13 8H16M8 0V3M8 13V16" stroke="#000" stroke-width="1.500"/><path d="M4.500 8H11.500M8 4.500V11.500" stroke="#f00" stroke-width="2"/><circle cx="8" cy="8" r="2.500" fill="#f00"/></svg>Show Last Position</button>
          <button class="mt-[2px] h-[21px] border border-[#adadad] bg-[#e1e1e1]">Optimization Settings</button>
        </div>
      </div>

      <div class="mt-[2px] mr-px ml-[2px] flex gap-[7px]">
        <button class="h-[21px] w-[73px] border border-[#adadad] bg-[#e1e1e1]">Devices</button>
        <div class="grid h-5 flex-1 items-center"><select aria-label="Device" class="col-start-1 row-start-1 h-5 appearance-none border border-[#adadad] bg-[#e1e1e1] pl-[2px]"><option>BlackCat</option></select><svg class="col-start-1 row-start-1 mr-1 h-[6px] w-[9px] justify-self-end"><use href="#chev"/></svg></div>
      </div>

      <div class="mt-auto ml-px flex h-[21px] items-start">
        <button class="h-[21px] w-[51px] border-b border-[#d8d8d8] bg-white">Laser</button>
        <div class="flex flex-1 border-t border-[#a0a0a0]">
          <button class="h-[19px] w-[53px] border-b border-[#d8d8d8]">Library</button>
        </div>
      </div>
    </aside>
  </main>

  <!-- layer palette -->
  <div class="flex h-8 shrink-0 items-center border-t border-white">
    <span class="mr-[3px] h-7 border-l-2 border-dotted border-[#b4b4b4]"></span>
    <div id="palette" class="flex items-center font-['Liberation_Sans',sans-serif] text-[12px]"></div>
  </div>
  <footer class="flex h-[21px] shrink-0">
    <span class="w-[635px] pt-1">x: 729.00, y: 51.00 mm</span>
    <span class="mt-1 h-4 border-l border-[#d4d4d4]"></span>
  </footer>

  <script>
    const colors = [
      ['00', '#000000', '#c8c8c8'], ['01', '#0000ff', '#c8c8ff'], ['02', '#ff0000', '#ffc8c8'], ['03', '#00e000', '#005000'],
      ['04', '#d0d000', '#3c3c00'], ['05', '#ff8000', '#5a2800'], ['06', '#00e0e0', '#004646'], ['07', '#ff00ff', '#ffc8ff'],
      ['08', '#b4b4b4', '#202020'], ['09', '#0000a0', '#c8c8ff'], ['10', '#a00000', '#ffc8c8'], ['11', '#00a000', '#c8ffc8'],
      ['12', '#a0a000', '#282800'], ['13', '#c08000', '#3c2000'], ['14', '#00a0ff', '#dcf0ff'], ['15', '#a000a0', '#ffc8ff'],
      ['16', '#808080', '#101010'], ['17', '#7d87b9', '#141e50'], ['18', '#bb7784', '#461420'], ['19', '#4a6fe3', '#c8d8ff'],
      ['20', '#d33f6a', '#ffc8dc'], ['21', '#8cd78c', '#145014'], ['22', '#f0b98d', '#503014'], ['23', '#f6c4e1', '#50283c'],
      ['24', '#fa9ed4', '#501e3c'], ['25', '#500a78', '#dcc8ff'], ['26', '#b45a00', '#ffdcb4'], ['27', '#004754', '#c8f0ff'],
      ['28', '#86fa88', '#145014'], ['29', '#ffdb66', '#503c00'], ['T1', '#f36926', '#501e00'], ['T2', '#0c96d9', '#dcf0ff']
    ];
    const palette = document.getElementById('palette');
    colors.forEach(([name, bg, fg], i) => {
      if (name === 'T1') {
        palette.insertAdjacentHTML('beforeend', '<span class="mr-[5px] h-6 w-px bg-[#c8c8c8]"></span>');
      }
      const frame = i === 0 ? 'h-7 w-[31px] mr-[3px] border border-[#90c8f6] bg-[#c0dcf3] pl-[3px] pt-[3px]' : 'pr-[7px]';
      palette.insertAdjacentHTML('beforeend',
        `<button class="${frame}"><span class="block size-6 leading-6" style="background:${bg};color:${fg}">${name}</span></button>`);
    });

    // rulers count down from the right edge of the bed, 10 mm per cell
    const canvas = document.getElementById('canvas');
    const cell = 22.205, x800 = 315.4, y20 = 19.9, edge = 60;
    function drawGrid() {
      const { width: w, height: h } = canvas.getBoundingClientRect();
      let d = '', labels = '';
      const text = (x, y, anchor, value) => {
        labels += `<text x="${x}" y="${y}" text-anchor="${anchor}">${value}</text>`;
      };
      for (let mm = 910; mm > 0; mm -= 10) {
        const x = Math.floor(x800 + (800 - mm) / 10 * cell);
        if (x > w) break;
        d += `M${x + 0.5} 0V${h}`;
        if (mm % 40 === 0 && x < w - 20) {
          text(x, 17, 'middle', mm);
          text(x, h - 7, 'middle', mm);
        }
      }
      text(edge, 17, 'end', 920);
      text(edge, h - 7, 'end', 920);
      for (let mm = 20; mm <= 400; mm += 10) {
        const y = Math.floor(y20 + (mm - 20) / 10 * cell);
        d += `M${edge} ${y + 0.5}H${w}`;
        if (mm % 40 === 0) {
          text(4, y + 5, 'start', mm);
          text(w - 4, y + 5, 'end', mm);
        }
      }
      document.getElementById('grid').setAttribute('d', d);
      document.getElementById('labels').innerHTML =
        `<path d="M${edge + 0.5} 0V${h}" stroke="#000"/>` + labels;
    }
    drawGrid();
    new ResizeObserver(drawGrid).observe(canvas.parentElement);
    window.addEventListener('load', drawGrid);
  </script>
</body>
</html>
